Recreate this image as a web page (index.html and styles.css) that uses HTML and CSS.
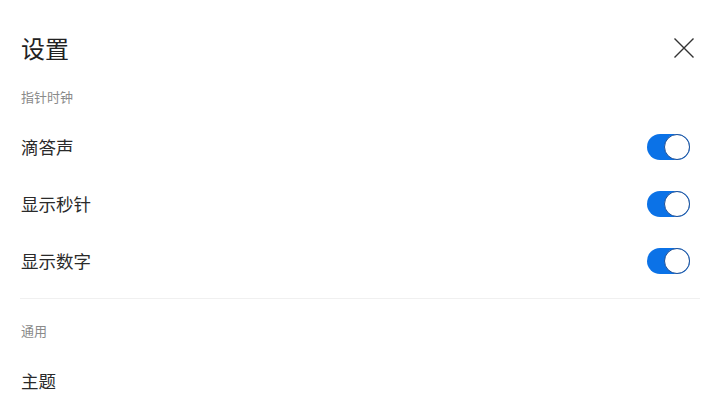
FILE: index.html
```html
<!DOCTYPE html>
<html lang="zh-CN">
<head>
  <meta charset="UTF-8" />
  <meta name="viewport" content="width=device-width, initial-scale=1.0" />
  <title>设置</title>
  <link rel="stylesheet" href="styles.css">
</head>
<body>
  <div class="settings">
    <div class="header">
      <h1 class="title">设置</h1>
      <button class="close-button" aria-label="关闭">
        <svg width="22" height="22" viewBox="0 0 22 22">
          <path d="M1.5 1.5 L20.5 20.5 M20.5 1.5 L1.5 20.5" stroke="#333" stroke-width="1.4" fill="none" />
        </svg>
      </button>
    </div>

    <div class="section-label">指针时钟</div>
    <div class="row">
      <span class="row-text">滴答声</span>
      <span class="switch on"><span class="knob"></span></span>
    </div>
    <div class="row">
      <span class="row-text">显示秒针</span>
      <span class="switch on"><span class="knob"></span></span>
    </div>
    <div class="row">
      <span class="row-text">显示数字</span>
      <span class="switch on"><span class="knob"></span></span>
    </div>

    <div class="divider"></div>

    <div class="section-label general">通用</div>
    <div class="row theme">
      <span class="row-text">主题</span>
    </div>
  </div>
</body>
</html>
```

FILE: styles.css
```css
body {
  margin: 0;
  padding: 0;
  background-color: #fff;
  font-family: "Noto Sans CJK SC", "Noto Sans", sans-serif;
  color: #222;
  overflow: hidden;
}

.settings {
  padding: 0 20px 0 21px;
}

.header {
  display: flex;
  justify-content: space-between;
  align-items: center;
  height: 72px;
  margin-top: 12px;
}

.title {
  margin: 0;
  font-size: 24px;
  font-weight: 400;
  line-height: 30px;
}

.close-button {
  background: none;
  border: none;
  padding: 0;
  margin-right: 5px;
  width: 22px;
  height: 22px;
  cursor: pointer;
}

.section-label {
  height: 26px;
  line-height: 26px;
  font-size: 13px;
  color: #8a8a8a;
  margin-bottom: 8px;
}

.section-label.general {
  margin-top: 19px;
  margin-bottom: 8px;
}

.row {
  display: flex;
  justify-content: space-between;
  align-items: center;
  height: 57px;
}

.row-text {
  font-size: 17.5px;
  line-height: 24px;
  color: #2a2a2a;
}

.switch {
  position: relative;
  display: inline-block;
  width: 43px;
  height: 26px;
  border-radius: 13px;
  background-color: #ddd;
  margin-right: 10px;
}

.switch.on {
  background-color: #0b72e7;
}

.knob {
  position: absolute;
  top: 0;
  right: 0;
  width: 24px;
  height: 24px;
  border-radius: 50%;
  background-color: #fff;
  border: 1px solid #1d4f96;
}

.divider {
  height: 1px;
  background-color: #f0f0f0;
  margin: 9px 0 0 -1px;
}
```
